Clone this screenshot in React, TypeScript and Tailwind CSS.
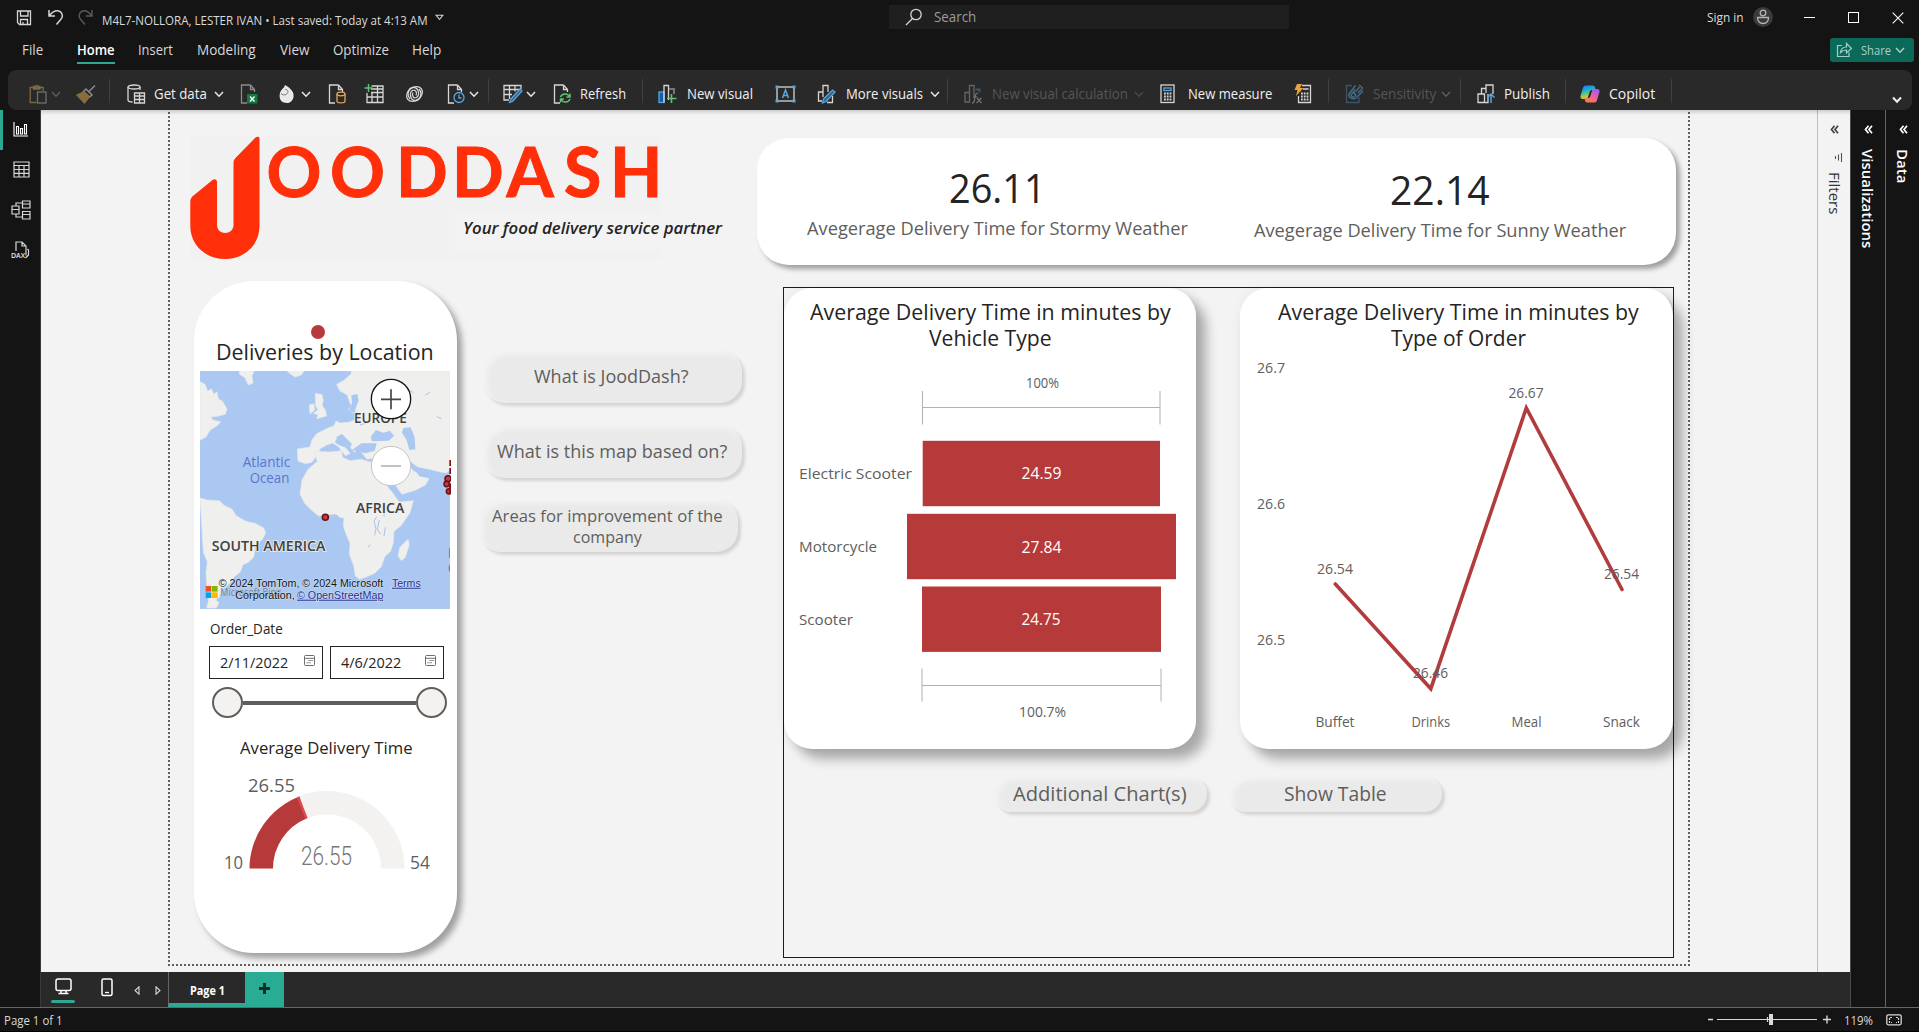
import React, { useLayoutEffect, useRef, useState } from "react";

/* Single line of text scaled horizontally so it fills exactly `w` pixels. */
function Fit({ w, className = "", children }: { w: number; className?: string; children: string }) {
  const ref = useRef<HTMLSpanElement>(null);
  const [k, setK] = useState(1);
  useLayoutEffect(() => {
    if (ref.current) setK(w / ref.current.offsetWidth);
  }, [w, children]);
  return (
    <span className={"block shrink-0 whitespace-nowrap " + className} style={{ width: w }}>
      <span ref={ref} className="inline-block origin-left" style={{ transform: `scaleX(${k})` }}>
        {children}
      </span>
    </span>
  );
}

/* Chart label, left edge at x and baseline at y. */
function Label({ x, y, w, size, className = "fill-[#605e5c]", children }: { x: number; y: number; w: number; size: number; className?: string; children: string }) {
  return (
    <text x={x} y={y} textLength={w} lengthAdjust="spacingAndGlyphs" fontSize={size} className={className}>
      {children}
    </text>
  );
}

type IconProps = { w: number; h?: number; className?: string; children: React.ReactNode };
function Icon({ w, h = 20, className = "", children }: IconProps) {
  return (
    <svg width={w} height={h} viewBox={`0 0 ${w} ${h}`} fill="none" stroke="#d6d6d6" strokeWidth="1.3" className={"shrink-0 " + className}>
      {children}
    </svg>
  );
}

function Chevron({ className = "", color = "#e8e8e8" }: { className?: string; color?: string }) {
  return (
    <Icon w={10} h={10} className={className}>
      <path d="M1 3l4 4.2L9 3" stroke={color} strokeWidth="1.5" />
    </Icon>
  );
}

function Sep({ className = "" }: { className?: string }) {
  return <div className={"h-6 w-px shrink-0 -translate-y-[3px] bg-[#404040] " + className} />;
}

function TitleBar() {
  return (
    <div className="flex h-[35px] items-start text-[#dcdcdc]">
      <Icon w={16} h={16} className="mt-[10px] ml-4">
        <path d="M1.5 1h13v13.500h-11l-2-2zM4.500 1v5h7.500V1M4.500 14.500V9.500h7v5M7 12v2" />
      </Icon>
      <Icon w={16} h={16} className="mt-[9px] ml-4">
        <path d="M1 1v6h6M1.500 6.500C4 3.500 6 1.800 9 1.800c5 0 7 5.500 3.500 9L8.500 15.500" strokeWidth="1.500" />
      </Icon>
      <Icon w={16} h={16} className="mt-[9px] ml-[14px]">
        <path d="M14 1v6H8M13.500 6.500C11 3.500 9 1.800 6.500 1.800c-5 0-7 5.500-3.500 9L7 15.500" stroke="#5a5a5a" strokeWidth="1.400" />
      </Icon>
      <Fit w={326} className="mt-3 ml-2 text-[13px] leading-[17px]">M4L7-NOLLORA, LESTER IVAN • Last saved: Today at 4:13 AM</Fit>
      <Icon w={9} h={7} className="mt-[14px] ml-[7px]">
        <path d="M1 1.200h7L4.500 5.500z" strokeWidth="1.100" />
      </Icon>
      <div className="mt-[5px] ml-[445px] flex h-6 w-[400px] items-center bg-[#1f1f1f]">
        <Icon w={18} h={18} className="ml-4">
          <circle cx="11" cy="6.500" r="5.200" />
          <path d="M7.500 10.500L1 17" />
        </Icon>
        <Fit w={42} className="ml-[11px] text-[14px] leading-6 text-[#9c9c9c]">Search</Fit>
      </div>
      <Fit w={37} className="mt-[9px] ml-[418px] text-[12.500px] leading-[17px]">Sign in</Fit>
      <div className="mt-[7px] ml-[9px] flex size-5 items-center justify-center rounded-full bg-[#3a3a3a]">
        <Icon w={14} h={16}>
          <circle cx="7" cy="4" r="2.800" stroke="#b5b5b5" />
          <path d="M1.500 8.500h11c0 4-2.500 6-5.500 6s-5.500-2-5.500-6z" stroke="#b5b5b5" />
        </Icon>
      </div>
      <Icon w={11} h={11} className="mt-3 ml-[31px]"><path d="M0 5.500h11" strokeWidth="1" stroke="#fff" /></Icon>
      <Icon w={11} h={11} className="mt-3 ml-[33px]"><rect x=".5" y=".5" width="10" height="10" strokeWidth="1" stroke="#fff" /></Icon>
      <Icon w={12} h={12} className="mt-3 ml-[33px]"><path d="M.7.7l10.600 10.600M11.300.7L.7 11.300" strokeWidth="1.100" stroke="#fff" /></Icon>
    </div>
  );
}

function Menu() {
  return (
    <div className="flex h-[35px] text-[14px] leading-[30px] text-[#d8d8d8]">
      <Fit w={21} className="ml-[22px]">File</Fit>
      <div className="ml-[34px]">
        <Fit w={38} className="h-[27px] font-semibold text-white">Home</Fit>
        <div className="h-[2px] w-[38px] bg-[#2fa893]" />
      </div>
      <Fit w={35} className="ml-[23px]">Insert</Fit>
      <Fit w={59} className="ml-6">Modeling</Fit>
      <Fit w={30} className="ml-6">View</Fit>
      <Fit w={56} className="ml-[23px]">Optimize</Fit>
      <Fit w={29} className="ml-[23px]">Help</Fit>
      <div className="mt-[3px] ml-auto mr-[5px] flex h-6 w-[84px] items-center rounded-[3px] bg-[#0c695a]">
        <Icon w={17} h={16} className="ml-[6px] -mt-[2px]">
          <path d="M6 4.500H1.500v11h11.500v-4M4.500 11.500c.5-4 3-5.500 6-5.500V2.500l5 5-5 4.500V9c-3 0-4.500.8-6 2.500z" stroke="#9fd0c6" strokeWidth="1.200" />
        </Icon>
        <Fit w={30} className="ml-2 text-[13px] leading-6 text-[#a9cfc7]">Share</Fit>
        <Chevron className="ml-[4px]" color="#a9cfc7" />
      </div>
    </div>
  );
}

const DOC = "M10.500 1H1.500v18H7M10.500 1v4.500h4M10.500 1L14.500 5.500V8";

function Ribbon() {
  return (
    <div className="mx-2 mr-[7px] flex h-10 items-center rounded-lg bg-[#292929] pt-[7px] text-[14px] leading-5 text-[#f0f0f0]">
      <Icon w={18} className="ml-[21px]">
        <path d="M7.500 18.500H1.200v-15h13V7M4.500 5V2.500h2C6.500 1 9 1 9 2.500h2V5z" stroke="#7d6a45" />
        <rect x="8.500" y="8" width="8.500" height="11" stroke="#707070" />
      </Icon>
      <Chevron className="ml-[4px]" color="#5d5d5d" />
      <Icon w={20} className="ml-[15px]">
        <path d="M19 1.500l-5.500 5.500M17 3.500l-4 4M10 5l6 6-2.500 2-6-5.500z" stroke="#8a8a8a" strokeWidth="1.500" />
        <path d="M7.500 8l5.500 5-4.500 6L1 11z" fill="#8a6c3d" stroke="#8a6c3d" />
      </Icon>
      <Sep className="ml-[13px]" />
      <Icon w={19} className="ml-[17px]">
        <path d="M1 3v13c0 1.500 2 2 4.500 2M13 3v3" />
        <ellipse cx="7" cy="3" rx="6" ry="2" />
        <path d="M7.500 9h10v10h-10zM7.500 12h10M7.500 15.500h10M12.500 9v10" />
      </Icon>
      <Fit w={53} className="ml-2 font-medium">Get data</Fit>
      <Chevron className="ml-[7px]" />
      <Icon w={18} className="ml-4">
        <path d={DOC} stroke="#8d8d8d" />
        <rect x="7" y="10" width="10.500" height="9.500" fill="#107c41" stroke="none" />
        <path d="M10 12.500l4.500 5M14.500 12.500l-4.500 5" stroke="#fff" />
      </Icon>
      <Icon w={16} className="ml-[21px]">
        <path d="M6 1c3 1.500 5 3 7.500 6.500C16.500 13 13 19 8 19S0 16 .7 10.500 5 5 6 1z" fill="#e9e9e9" stroke="none" />
        <path d="M2 9.500c2.500 2.500 6.500 1.500 7-2-.3-2-2-2.500-3-1.500" stroke="#777" strokeWidth="1" />
      </Icon>
      <Chevron className="ml-[6px]" />
      <Icon w={18} className="ml-[17px]">
        <path d={DOC} />
        <path d="M9 10v7c0 2.500 8 2.500 8 0v-7" stroke="#e3a95c" />
        <ellipse cx="13" cy="10" rx="4" ry="1.800" stroke="#e3a95c" />
      </Icon>
      <Icon w={20} className="ml-[18px]">
        <path d="M7.500 2H19v16.500H3V9M3 13h16M7 8.500h12M8 8v10.500M13.500 2v16.500M7 5h12" />
        <path d="M4.500 0v8M.5 4h8" stroke="#5fc472" strokeWidth="1.500" />
      </Icon>
      <Icon w={19} className="ml-[21px]">
        <ellipse cx="9.500" cy="10" rx="8.600" ry="6.500" transform="rotate(-38 9.500 10)" />
        <path d="M5 15c-4-5-1-12 4-11.500 5 .5 6 8 2.500 10-3 1.500-5-2-3.500-5M14 5c4 5 1 12-4 11.500-5-.5-6-8-2.500-10 3-1.500 5 2 3.500 5" />
      </Icon>
      <Icon w={18} className="ml-[23px]">
        <path d={DOC} />
        <circle cx="12" cy="13.500" r="5" stroke="#5aa5dc" />
        <path d="M12 10.500v3.500h2.500" stroke="#5aa5dc" />
      </Icon>
      <Chevron className="ml-[4px]" />
      <Sep className="ml-[9px]" />
      <Icon w={20} className="ml-[14px]">
        <path d="M18 5V1.500H1v14.500h5M1 5.500h17M1 10.500h8M6.500 1.500V15M12 1.500v6" />
        <path d="M8 15L17 5l2 2-9.500 10.500L6.500 18.500z" fill="#36658a" stroke="#5aa5dc" />
      </Icon>
      <Chevron className="ml-[3px]" />
      <Icon w={19} className="ml-[17px]">
        <path d={DOC} />
        <path d="M7.500 13c1.500-4 7-4 9-.5M17 9.500v3.500h-3.500M17 15c-1.500 4-7 4-9 .5M7.500 18.500V15H11" stroke="#5fc472" strokeWidth="1.500" />
      </Icon>
      <Fit w={46} className="ml-[8px] font-medium">Refresh</Fit>
      <Sep className="ml-4" />
      <Icon w={19} className="ml-[15px]">
        <rect x="1" y="8" width="5" height="10.500" fill="#0f5ea8" stroke="#5aa5dc" />
        <path d="M6 18.500V1.500h4.500V16" />
        <path d="M11 5h5v5" stroke="#777" strokeWidth="2" />
        <path d="M13.500 10v9M9 14.500h9.500" stroke="#5fc472" strokeWidth="1.600" />
      </Icon>
      <Fit w={66} className="ml-[10px] font-medium">New visual</Fit>
      <Icon w={21} className="ml-[22px]">
        <rect x="2" y="3" width="17" height="14" />
        <path d="M7.500 14L10.500 6l3 8M8.500 11.500h4" stroke="#5aa5dc" strokeWidth="1.500" />
        <path d="M.5 1.500h3v3h-3zM17.500 1.500h3v3h-3zM.5 15.500h3v3h-3zM17.500 15.500h3v3h-3z" fill="#5aa5dc" stroke="none" />
      </Icon>
      <Icon w={19} className="ml-[21px]">
        <path d="M5 17H1.500V8H6M6 13V1.500h5V8M15.500 12v6.500H10" />
        <path d="M6.500 15L15.500 6l2.500 2-9 9.500-3.500 1.500z" fill="#36658a" stroke="#5aa5dc" />
      </Icon>
      <Fit w={77} className="ml-[10px] font-medium">More visuals</Fit>
      <Chevron className="ml-[7px]" />
      <Sep className="ml-[7px]" />
      <Icon w={18} className="ml-4">
        <path d="M1 8.500h4.500v9.500H1zM5.500 18V1.500H10V14" stroke="#666" />
        <path d="M11.500 5.500h4v3" stroke="#3b5871" strokeWidth="2" />
        <path d="M14 9.500c-2-1-2.500 1-3 4s-1 6-3 5.500M9.500 13h4M13 14l4.500 5M17.500 14l-5 5" stroke="#777" strokeWidth="1.200" />
      </Icon>
      <Fit w={136} className="ml-[10px] text-[#565656]">New visual calculation</Fit>
      <Chevron className="ml-[6px]" color="#484848" />
      <Icon w={15} className="ml-[16px]">
        <rect x="1" y="1" width="13" height="17.500" />
        <rect x="4" y="4" width="7" height="2.500" stroke="#5aa5dc" />
        <path d="M4 9.500h7.500M4 12.500h7.500M4 15.500h7.500" strokeWidth="1.800" strokeDasharray="1.800 1" />
      </Icon>
      <Fit w={84} className="ml-[13px] font-medium">New measure</Fit>
      <Icon w={18} className="ml-[22px]">
        <path d="M8 1.500h8.500v17H4.500V12M9 5h5.500" />
        <path d="M7 9.500h8M7 12.500h8M7 15.500h8" strokeWidth="1.800" strokeDasharray="1.800 1" />
        <path d="M3 0h5L6 4h3.500L2 12l1.500-6H.5z" fill="#e8a33a" stroke="none" />
      </Icon>
      <Sep className="ml-4" />
      <Icon w={19} className="ml-4">
        <path d="M7 1.500H1.500v17H14V13" stroke="#3f5668" />
        <path d="M4 10l4-5M3.500 11.500c0-2 5-7 6-8.500M11 14c-3 2-8-1-7-3M11 14l5-5M9 3l1.500-1.500M16 9l2-2M6 11l3.500-4.500v3.500c1.500 0 2 1 0 2.500-1.500 1-3.500 0-3.500-1.500zM11 7.500L14.500 3M13 9l4.500-4.500M14 1l4 3.500" stroke="#456a85" strokeWidth="1.500" />
      </Icon>
      <Fit w={63} className="ml-[9px] text-[#565656]">Sensitivity</Fit>
      <Chevron className="ml-[5px]" color="#5d5d5d" />
      <Sep className="ml-[9px]" />
      <Icon w={19} className="ml-4">
        <path d="M1 10h6.500v8.500H1zM4.500 10V4.500H9M9 4.500V1h7v9M7.500 18.500H11V10M9 4.500v4.500" />
        <path d="M14 19V10M10.500 13.500L14 10l3.500 3.500" stroke="#5aa5dc" strokeWidth="1.500" />
      </Icon>
      <Fit w={46} className="ml-[8px] font-medium">Publish</Fit>
      <Sep className="ml-[15px]" />
      <svg width="20" height="18" viewBox="0 0 20 18" className="ml-[14px] shrink-0">
        <defs>
          <linearGradient id="cpa" x1="0" y1="0" x2="0.300" y2="1">
            <stop offset="0" stopColor="#2870ea" /><stop offset=".45" stopColor="#1fb0d8" /><stop offset=".75" stopColor="#86cf49" /><stop offset="1" stopColor="#f2c52e" />
          </linearGradient>
          <linearGradient id="cpb" x1=".8" y1="0" x2="0.200" y2="1">
            <stop offset="0" stopColor="#9b5cf0" /><stop offset=".5" stopColor="#ee5fa0" /><stop offset="1" stopColor="#f9803d" />
          </linearGradient>
        </defs>
        <path d="M6 .5h7c1.200 0 1.700.8 2 2l.7 2.500H12c-1.300 0-2 .7-2.400 2L8 12c-.5 1.500-1.200 2-2.500 2H3C.8 14 0 12.500.6 10.500L3 2.800C3.500 1.200 4.500.5 6 .5z" fill="url(#cpa)" />
        <path d="M14 17.500H7c-1.200 0-1.700-.8-2-2L4.300 13H8c1.300 0 2-.7 2.400-2L12 6c.5-1.500 1.200-2 2.500-2H17c2.200 0 3 1.500 2.400 3.500L17 15.200c-.5 1.600-1.500 2.300-3 2.300z" fill="url(#cpb)" />
      </svg>
      <Fit w={46} className="ml-[9px] font-medium">Copilot</Fit>
      <Sep className="ml-4" />
      <Icon w={10} h={10} className="mt-[12px] ml-auto mr-[10px]">
        <path d="M1 2.500l4 4.200 4-4.200" strokeWidth="2" stroke="#eee" />
      </Icon>
    </div>
  );
}

function Rail() {
  return (
    <div className="flex w-[41px] shrink-0 border-r border-[#3a3a3a]">
      <div className="h-10 w-[3px] bg-[#2fa893]" />
      <div className="flex flex-col items-center pl-[8px]">
        <Icon w={15} h={15} className="mt-3 -ml-px"><path d="M1 0v14h14M3.500 12V4.500h2V12zM7.500 12V6.500h2V12zM11.500 12V2.500h2V12z" stroke="#fff" strokeWidth="1.100" /></Icon>
        <Icon w={17} h={17} className="mt-[24px]"><path d="M1 1h15v15H1zM1 4.500h15M1 8.500h15M1 12.300h15M6 4.500V16M11 4.500V16" strokeWidth="1.200" /></Icon>
        <Icon w={20} h={20} className="mt-[22px]"><path d="M1 6h7v8H1zM1 9.500h7M11.500 1H19v7h-7.500zM11.500 4H19M11.500 11.500H19V19h-7.500zM11.500 14.500H19M5 6V3h6.500M5 14v3h6.500" strokeWidth="1.200" /></Icon>
        <svg width="20" height="19" viewBox="0 0 20 19" fill="none" stroke="#d6d6d6" strokeWidth="1.200" className="mt-[21px] -ml-px">
          <path d="M5 10V1h6l4 4v9.500M11 1v4h4M16.500 8l1 1v5l-3 3" />
          <text x="0" y="16.500" fontSize="7" fontWeight="600" textLength="14" stroke="none" fill="#e6e6e6">DAX</text>
        </svg>
      </div>
    </div>
  );
}

function Logo() {
  return (
    <div className="relative mt-[26px] ml-[22px] h-[124px] w-[533px] shrink-0">
      <svg width="471" height="124" viewBox="190 136 471 124" className="block bg-[#f1f1f1]">
        <path d="M259.500 138.500V226c0 19-15 33-34.500 33s-34.700-14-34.700-33V202c0-2 .6-4 2-5.500L212.500 180c2-1.500 4.500-.5 4.500 2V225c0 5 4 8 8.200 8s8.300-3 8.300-8V163c0-2 .5-3.500 2-5L255.500 137.500c2-1.500 4-1 4 1z" fill="#ff2f0a" />
        <text x="266.500 330 396 452 506.500 564 610" y="197.300" fontSize="68" className="fill-[#ff2f0a] font-['Lato'] font-bold" stroke="#ff2f0a" strokeWidth="1">OODDASH</text>
      </svg>
      <div className="absolute top-[78px] left-[265px] h-[36px] w-[270px] bg-[#f3f3f3] pt-[3px] pl-[8px]">
        <Fit w={259} className="text-[15.500px] leading-[22px] font-semibold text-[#252423] italic">Your food delivery service partner</Fit>
      </div>
    </div>
  );
}

function Kpi({ value, vw, label, lw, className }: { value: string; vw: number; label: string; lw: number; className: string }) {
  return (
    <div className={"flex flex-col items-center " + className}>
      <Fit w={vw} className="text-[41px] leading-[44px] font-medium text-[#252423]">{value}</Fit>
      <Fit w={lw} className="mt-[7px] text-[19px] leading-6 text-[#605e5c]">{label}</Fit>
    </div>
  );
}

function MapView() {
  return (
    <svg width="251" height="238" viewBox="60 303 753 714" className="block">
      <rect x="60" y="303" width="750" height="714" fill="#abc8f2" />
      <g fill="#efefed" stroke="#e4e8ea" strokeWidth="2" strokeLinejoin="round">
        <path d="M60 335l15 8 8 20 12-6 6 16 10-8 4 22 12 6 14 24-5 16-24 6-20 2 8 10 22 4-8 10-24 16-12 20-18 9z" />
        <path d="M178 303h44l-6 14 3 22-14 6-10-22-16-10z" />
        <path d="M322 303h50l-8 12-18 6-14-8z" />
        <path d="M60 684l22 6 36 2 14 14 25 12 10 18 30 18 28 6 26 14 6 14-8 18-22 20-6 36-18 16-14 6-8 22-20 16-6 12-14 14-18 12-4 20-12 10 10 8-8 16h-29l6-24-6-40-2-44 4-30-12-30z" />
        <path d="M406 370l20 4 4 18-4 14 10 14 4 18-30 8 4-12-14-4 14-10-8-14zM388 404l14-2 2 18-14 12z" />
        <path d="M500 303h310v298l-12 8-22-4-30-8-32-6-22-16-10 6 20 24 30 2 18 14-14 24-30 16-40 12-20-28-30-46-4-26 8-10-60 4-20-26-4-8-12 14-16-18-20-18-10 4 24 24 8 12-14 6-22-28-16-10-18 6-18 10-12 22-14 20-20 4-22-8-2-36 38-6 6-22 14-18 32-16 20-8 6-14 12 6 26-2 20-8 6-26-14 6-12-10 8-14-6-10-6-20-22-12-10-20 22-12 20-18 8-22z" />
        <path d="M402 544l48 2 34-4 4 20 22 10 34-4 26 8 28 2 10 30 16 36 22 36 12 16 42-4-10 36-26 38-22 18-2 34-8 26-18 16-10 30-20 20-28 12-18 6-12-10-4-28-14-38 2-32-12-28-8-24 2-24-12-2-12-10-24 2-28 4-22-18-20-20-14-28 6-42 18-32 28-24z" />
        <path d="M684 808l4 16-12 38-12 10-10-14 6-26 12-12z" />
      </g>
      <g fill="#abc8f2">
        <path d="M514 376l18-4 4 20-8 20-4 16-14-2-2-10 8-16z" />
        <path d="M572 500l16-20 22 8 20-6 12 16-16 14-50 2zM670 474l22-2 12 30 2 36-18 2-8-30-14-22z" />
        <path d="M470 500l16-8 30 30-8 14-30-10-14-10 6-8zM590 520l-6 22-28 8-40-10 28-20z" />
        <path d="M602 604l10 6 24 40 14 22-4 4-20-22-22-38z" />
        <path d="M700 595l30 10 80 12v40l-22-10-30-20-40-8z" />
      </g>
      <path d="M590 740l-8 14 6 22-4 20M598 750l-6 28 10 14M570 824l-6 8M614 700l-2 40M616 772l-4 26M540 465l20-6M736 375l14-8M770 440l14 6M690 362l10 6" stroke="#a9c3e6" strokeWidth="3" fill="none" />
      <g className="fill-[#404040] font-semibold" stroke="#efefed" strokeWidth="5" paintOrder="stroke" fontSize="43">
        <text x="522" y="459" textLength="158" lengthAdjust="spacingAndGlyphs">EUROPE</text>
        <text x="528" y="730" textLength="145" lengthAdjust="spacingAndGlyphs">AFRICA</text>
        <text x="95" y="844" textLength="341" lengthAdjust="spacingAndGlyphs">SOUTH AMERICA</text>
      </g>
      <g fontSize="41" className="fill-[#5b76cc]">
        <text x="188" y="592" textLength="143" lengthAdjust="spacingAndGlyphs">Atlantic</text>
        <text x="209" y="638" textLength="119" lengthAdjust="spacingAndGlyphs">Ocean</text>
        <text x="803" y="865">I</text>
        <text x="803" y="910">C</text>
      </g>
      <rect x="810" y="303" width="3" height="714" fill="#fff" />
      <g stroke="#151515" fill="#fff">
        <circle cx="633" cy="387" r="59" strokeWidth="4" />
        <path d="M603 388h60M633 358v60" stroke="#444" strokeWidth="5" />
        <circle cx="633" cy="588" r="59" strokeWidth="3" stroke="#c4c4c4" />
        <path d="M603 588h60" stroke="#b5b5b5" strokeWidth="5" />
      </g>
      <g fill="#c23a3a" stroke="#6b0f12" strokeWidth="4.500">
        <circle cx="436" cy="742" r="9" />
        <circle cx="804" cy="626" r="9" /><circle cx="800" cy="642" r="8" /><circle cx="807" cy="664" r="8" />
      </g>
      <path d="M811 570v18M811 594v18M810 640v32" stroke="#8c0f14" strokeWidth="6" />
      <text x="121" y="977" fontSize="30" textLength="182" lengthAdjust="spacingAndGlyphs" className="fill-[#7e858d]">Microsoft Bing</text>
      <path d="M77 948h17v17H77z" fill="#f25022" /><path d="M96 948h17v17H96z" fill="#7fba00" /><path d="M77 967h17v17H77z" fill="#00a4ef" /><path d="M96 967h17v17H96z" fill="#ffb900" />
      <g fontFamily="'Liberation Sans', Arial, sans-serif" className="fill-[#111]" fontSize="32" stroke="#fff" strokeOpacity=".45" strokeWidth="3" paintOrder="stroke">
        <text x="116" y="950" textLength="494" lengthAdjust="spacingAndGlyphs">© 2024 TomTom, © 2024 Microsoft</text>
        <text x="166" y="986" textLength="178" lengthAdjust="spacingAndGlyphs">Corporation,</text>
        <text x="636" y="950" textLength="86" lengthAdjust="spacingAndGlyphs" className="fill-[#1f2f8f] underline">Terms</text>
        <text x="351" y="986" textLength="259" lengthAdjust="spacingAndGlyphs" className="fill-[#1f2f8f] underline">© OpenStreetMap</text>
      </g>
    </svg>
  );
}

function DateBox({ text, w, className = "" }: { text: string; w: number; className?: string }) {
  return (
    <div className={"flex h-[33px] w-[114px] justify-between border-[1.500px] border-[#252423] pl-[10px] pr-[7px] " + className}>
      <Fit w={w} className="text-[14px] leading-[31px] text-[#252423]">{text}</Fit>
      <Icon w={11} h={11} className="mt-[8px]">
        <rect x=".5" y=".5" width="10" height="10" rx="1" strokeWidth=".9" stroke="#605e5c" />
        <path d="M.5 3.300h10" strokeWidth=".9" stroke="#605e5c" />
        <path d="M4.500 5.500h4.500M2.500 7.800h4.500" strokeWidth="1.100" strokeDasharray="1.200 .7" stroke="#605e5c" />
      </Icon>
    </div>
  );
}

function Gauge() {
  return (
    <svg width="263" height="110" viewBox="194 765 263 110" className="block">
      <path d="M249.500 868.500a77.500 77.500 0 0 1 155 0h-23.500a54 54 0 0 0-108 0z" fill="#f3f2f1" />
      <path d="M249.500 868.500A77.500 77.500 0 0 1 299.500 796.500L306.500 818.500A54 54 0 0 0 273 868.500z" fill="#b73a3a" />
      <path d="M298 797l8.500 21.500" stroke="#e0494d" strokeWidth="2.500" />
      <Label x={248} y={792} w={47} size={19}>26.55</Label>
      <Label x={224} y={869} w={19} size={19}>10</Label>
      <Label x={410} y={869} w={20} size={19}>54</Label>
      <text x="301" y="864.500" fontSize="26" textLength="51" lengthAdjust="spacingAndGlyphs" className="fill-[#777] font-['Roboto'] font-light">26.55</text>
    </svg>
  );
}

function LocationCard() {
  return (
    <div className="mt-[16px] ml-[26px] h-[672px] w-[263px] shrink-0 rounded-[60px] bg-white shadow-[5px_5px_6px_rgba(0,0,0,0.35)]">
      <div className="mt-[44px] ml-[117px] size-[14px] rounded-full bg-[#b73a3a]" />
      <Fit w={218} className="-mt-px ml-[22px] text-[22px] leading-[26px] text-[#252423]">Deliveries by Location</Fit>
      <div className="mt-[7px] ml-[6px]"><MapView /></div>
      <Fit w={73} className="mt-[10px] ml-[16px] text-[14px] leading-5 text-[#252423]">Order_Date</Fit>
      <div className="mt-[7px] ml-[15px] flex gap-[7px]">
        <DateBox text="2/11/2022" w={68} />
        <DateBox text="4/6/2022" w={60} />
      </div>
      <div className="mt-[8px] ml-[18px] flex items-center">
        <div className="size-[31px] rounded-full border-[2.500px] border-[#605e5c] bg-[#f3f2f1]" />
        <div className="h-[4px] w-[173px] bg-[#605e5c]" />
        <div className="size-[31px] rounded-full border-[2.500px] border-[#605e5c] bg-[#f3f2f1]" />
      </div>
      <Fit w={173} className="mt-[18px] ml-[46px] text-[16.500px] leading-6 font-medium text-[#252423]">Average Delivery Time</Fit>
      <div className="mt-[5px]"><Gauge /></div>
    </div>
  );
}

function Pill({ className = "", children }: { className?: string; children: React.ReactNode }) {
  return (
    <div className={"flex flex-col items-center justify-center bg-[#eaeaea] text-[#605e5c] shadow-[3px_3px_3px_#d6d3d3,inset_4px_4px_5px_#f3f3f3] " + className}>
      {children}
    </div>
  );
}

function FunnelCard() {
  return (
    <div className="h-[461px] w-[412px] shrink-0 rounded-[28px] bg-white pt-[10px] shadow-[10px_10px_12px_rgba(0,0,0,0.3),0_0_12px_rgba(0,0,0,0.05)]">
      <div className="flex flex-col items-center text-[22px] leading-[26px] text-[#252423]">
        <Fit w={361}>Average Delivery Time in minutes by</Fit>
        <Fit w={123}>Vehicle Type</Fit>
      </div>
      <svg width="412" height="385" viewBox="784 350 412 385" className="block">
        <g fill="#b73a3a">
          <rect x="922.700" y="440.800" width="237.300" height="65.400" />
          <rect x="907" y="513.800" width="269" height="65.400" />
          <rect x="922" y="586.500" width="239" height="65.400" />
        </g>
        <path d="M922.500 391v33.500M1160 391v33.500M922.500 407.500h237.500M922 668.500v33M1161 668.500v33M922 685.500h239" stroke="#b3b0ad" strokeWidth="1" fill="none" />
        <Label x={1026} y={388} w={33} size={15}>100%</Label>
        <Label x={1019} y={717} w={47} size={15}>100.7%</Label>
        <Label x={799} y={479} w={113} size={15}>Electric Scooter</Label>
        <Label x={799} y={552.300} w={78} size={15}>Motorcycle</Label>
        <Label x={799} y={624.500} w={54} size={15}>Scooter</Label>
        <Label x={1021.500} y={479} w={40} size={15.500} className="fill-white font-medium">24.59</Label>
        <Label x={1021.500} y={552.500} w={40} size={15.500} className="fill-white font-medium">27.84</Label>
        <Label x={1021.500} y={625.300} w={39} size={15.500} className="fill-white font-medium">24.75</Label>
      </svg>
    </div>
  );
}

function LineCard() {
  return (
    <div className="h-[461px] w-[433px] shrink-0 rounded-[28px] bg-white pt-[10px] shadow-[10px_10px_12px_rgba(0,0,0,0.3),0_0_12px_rgba(0,0,0,0.05)]">
      <div className="flex flex-col items-center pl-[4px] text-[22px] leading-[26px] text-[#252423]">
        <Fit w={361}>Average Delivery Time in minutes by</Fit>
        <Fit w={135}>Type of Order</Fit>
      </div>
      <svg width="433" height="385" viewBox="1240 350 433 385" className="block">
        <Label x={1257} y={373} w={28} size={14}>26.7</Label>
        <Label x={1257} y={509} w={28} size={14}>26.6</Label>
        <Label x={1257} y={645} w={28} size={14}>26.5</Label>
        <path d="M1335.300 584L1430.800 688.700L1526.300 408L1622 589.500" stroke="#b23c3d" strokeWidth="3.600" strokeLinecap="round" fill="none" />
        <Label x={1317} y={574} w={36} size={14}>26.54</Label>
        <Label x={1413} y={678} w={35} size={14}>26.46</Label>
        <Label x={1508.500} y={398} w={35} size={14}>26.67</Label>
        <Label x={1604} y={579} w={35} size={14}>26.54</Label>
        <Label x={1315.500} y={727} w={39} size={14}>Buffet</Label>
        <Label x={1411.500} y={727} w={38.500} size={14}>Drinks</Label>
        <Label x={1511.500} y={727} w={30} size={14}>Meal</Label>
        <Label x={1603} y={727} w={37} size={14}>Snack</Label>
      </svg>
    </div>
  );
}

function Report() {
  return (
    <div className="relative flex h-[856px] w-[1522px] shrink-0 flex-col">
      <div className="absolute top-0 left-0 h-full w-[2px] bg-[repeating-linear-gradient(to_bottom,#f3f3f3_0_2px,#605e5c_2px_4px)]" />
      <div className="absolute top-0 right-0 h-full w-[2px] bg-[repeating-linear-gradient(to_bottom,#f3f3f3_0_2px,#605e5c_2px_4px)]" />
      <div className="absolute bottom-0 left-0 h-[2px] w-full bg-[repeating-linear-gradient(to_right,#605e5c_0_2px,#f3f3f3_2px_4px)]" />
      <div className="flex h-[155px] shrink-0 items-start">
        <Logo />
        <div className="mt-[28px] ml-[34px] flex h-[127px] w-[919px] shrink-0 rounded-[32px] bg-white shadow-[4px_4px_5px_rgba(0,0,0,0.35)]">
          <Kpi value="26.11" vw={97} label="Avegerage Delivery Time for Stormy Weather" lw={381} className="mt-[27px] ml-[50px] shrink-0" />
          <Kpi value="22.14" vw={100} label="Avegerage Delivery Time for Sunny Weather" lw={372} className="mt-[29px] ml-[66px] shrink-0" />
        </div>
      </div>
      <div className="flex items-start">
        <LocationCard />
        <div className="mt-[85px] ml-[26px] w-[259px] shrink-0 text-[18px]">
          <Pill className="h-[53px] rounded-[22px] pr-[2px] pb-[2px]"><Fit w={155} className="leading-6">What is JoodDash?</Fit></Pill>
          <Pill className="mt-[22px] h-[53px] rounded-[22px] pr-[2px] pb-[2px]"><Fit w={230} className="leading-6">What is this map based on?</Fit></Pill>
          <Pill className="mt-[21px] -ml-1 h-[53px] w-[259px] rounded-[22px] pr-[2px] text-[17px]">
            <Fit w={231} className="leading-[21px]">Areas for improvement of the</Fit>
            <Fit w={69} className="leading-[21px]">company</Fit>
          </Pill>
        </div>
        <div className="mt-[22px] ml-[41px] h-[671px] w-[891px] shrink-0 border border-[#1c1c1c]">
          <div className="flex gap-[44px]">
            <FunnelCard />
            <LineCard />
          </div>
          <div className="mt-[27px] ml-[210px] flex gap-[22px] text-[20px]">
            <Pill className="h-[36px] w-[213px] rounded-[18px] pr-[2px]"><Fit w={174} className="leading-7">Additional Chart(s)</Fit></Pill>
            <Pill className="h-[36px] w-[213px] rounded-[18px] pr-[1px]"><Fit w={103} className="leading-7">Show Table</Fit></Pill>
          </div>
        </div>
      </div>
    </div>
  );
}

function Collapse({ color, className = "" }: { color: string; className?: string }) {
  return (
    <Icon w={9} h={9} className={className}>
      <path d="M4.500.8L1.500 4.500l3 3.700M8 .8L5 4.500l3 3.700" stroke={color} strokeWidth="1.700" />
    </Icon>
  );
}

export default function App() {
  return (
    <div className="flex h-[1032px] w-[1919px] flex-col overflow-hidden bg-[#141414] font-['Open_Sans','Noto_Sans',sans-serif]">
      <TitleBar />
      <Menu />
      <Ribbon />
      <div className="flex h-[897px] shrink-0">
        <Rail />
        <div className="flex w-[1809px] shrink-0 flex-col">
          <div className="relative flex h-[862px] bg-[#f3f3f3]">
            <div className="absolute inset-x-0 top-0 z-10 h-[5px] bg-gradient-to-b from-black/15 to-transparent" />
            <div className="w-[1776px] shrink-0 overflow-hidden pl-[127px]"><Report /></div>
            <div className="flex w-[33px] flex-col items-center border-l border-[#bdbdbd] text-[#333]">
              <Collapse color="#444" className="mt-[15px]" />
              <Icon w={11} h={9} className="mt-[19px] translate-x-[3px]"><path d="M9.500 0v9M6.500 1.500v6M3.500 3v3" stroke="#555" strokeWidth="1.100" /></Icon>
              <span className="mt-[10px] translate-x-px text-[15px] leading-5 font-medium [writing-mode:vertical-rl]">Filters</span>
            </div>
          </div>
          <div className="flex h-[35px] bg-[#292929]">
            <div className="ml-[10px] flex w-6 flex-col items-center">
              <Icon w={17} h={17} className="mt-[6px]"><rect x="1" y="1" width="15" height="11.500" rx="2" stroke="#fff" strokeWidth="1.500" /><path d="M6 13v2M11 13v2M3.500 15.500h10" stroke="#fff" strokeWidth="1.500" /></Icon>
              <div className="mt-[5px] h-[3px] w-6 rounded-full bg-[#2fa893]" />
            </div>
            <Icon w={12} h={19} className="mt-[6px] ml-[26px]"><rect x="1" y="1" width="10" height="16.500" rx="1.500" stroke="#fff" strokeWidth="1.500" /><path d="M4 14.500h4" stroke="#fff" /></Icon>
            <Icon w={6} h={9} className="mt-[14px] ml-[21px]"><path d="M5 .8v7.400L1 4.500z" strokeWidth="1.100" /></Icon>
            <Icon w={6} h={9} className="mt-[14px] ml-[15px]"><path d="M1 .8v7.400l4-3.700z" strokeWidth="1.100" /></Icon>
            <div className="ml-[7px] flex w-[77px] justify-center border-b-4 border-l border-b-[#2fa893] border-l-[#666]">
              <Fit w={35} className="mt-[3px] text-[13px] leading-[31px] font-bold text-white">Page 1</Fit>
            </div>
            <div className="flex w-[39px] items-center justify-center bg-[#2aab94]">
              <Icon w={11} h={11} className="mb-[2px]"><path d="M5.500 0v11M0 5.500h11" stroke="#142b27" strokeWidth="3" /></Icon>
            </div>
          </div>
        </div>
        <div className="flex w-[35px] shrink-0 flex-col items-center border-l border-[#4a4a4a] text-white">
          <Collapse color="#fff" className="mt-[15px]" />
          <span className="mt-[15px] text-[15px] leading-5 font-semibold [writing-mode:vertical-rl]">Visualizations</span>
        </div>
        <div className="flex w-[34px] shrink-0 flex-col items-center border-l border-[#666] text-white">
          <Collapse color="#fff" className="mt-[15px] ml-[2px]" />
          <span className="mt-[15px] text-[15px] leading-5 font-semibold [writing-mode:vertical-rl]">Data</span>
        </div>
      </div>
      <div className="flex h-[25px] shrink-0 items-center border-t border-b border-t-[#666] border-b-black text-[13px] text-[#d8d8d8]">
        <Fit w={59} className="ml-1 leading-6">Page 1 of 1</Fit>
        <svg width="125" height="13" viewBox="0 0 125 13" fill="none" stroke="#d8d8d8" className="ml-auto">
          <path d="M1 6.500h5" strokeWidth="1.500" />
          <path d="M10 6.500h100" />
          <path d="M60.500 4v5" strokeWidth="1.200" />
          <path d="M64 1v11" strokeWidth="4" />
          <path d="M116 6.500h8M120 2.500v8" strokeWidth="1.400" />
        </svg>
        <Fit w={29} className="ml-[12px] leading-6">119%</Fit>
        <Icon w={16} h={12} className="mr-[17px] ml-[13px]"><rect x=".8" y=".8" width="14.400" height="10" rx="1.500" /><path d="M6 3.500H3.500v5H6M10 3.500h2.500v5H10" strokeWidth="1.200" strokeDasharray="2 1" /></Icon>
      </div>
    </div>
  );
}
